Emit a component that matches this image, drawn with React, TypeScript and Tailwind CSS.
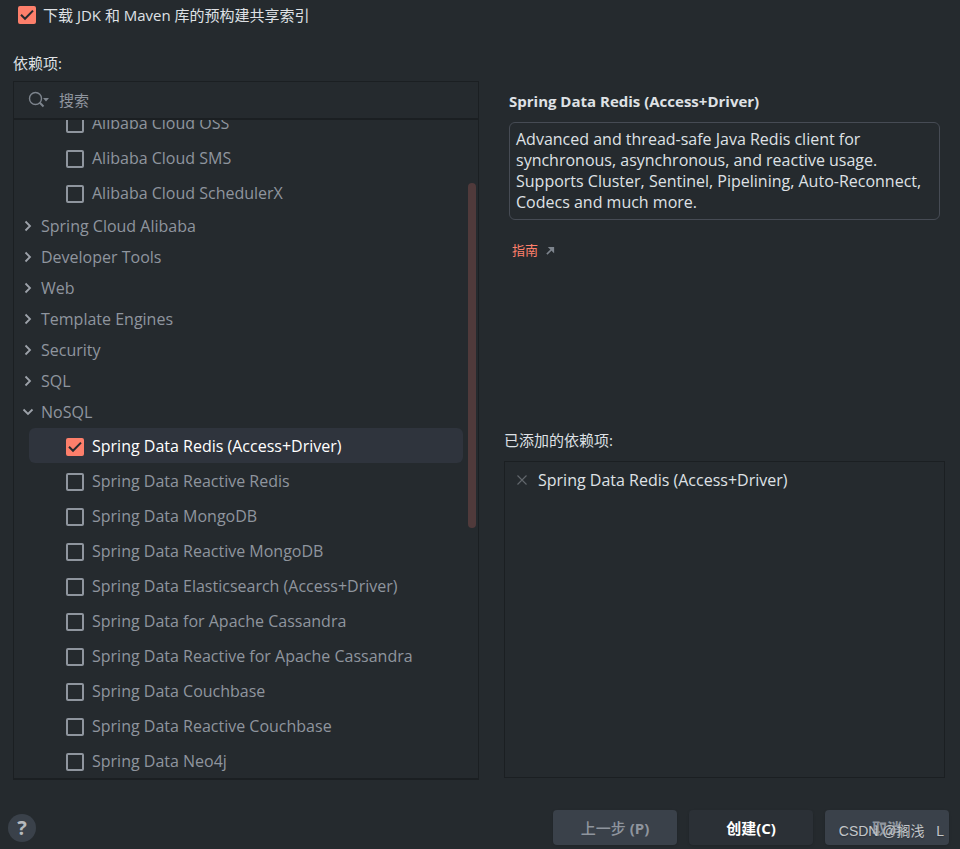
import { useState } from 'react'

interface TreeGroup {
  name: string
  open?: boolean
  items?: string[]
}

const DESCRIPTION =
  'Advanced and thread-safe Java Redis client for synchronous, asynchronous, and reactive usage. Supports Cluster, Sentinel, Pipelining, Auto-Reconnect, Codecs and much more.'

const alibabaItems = ['Alibaba Cloud OSS', 'Alibaba Cloud SMS', 'Alibaba Cloud SchedulerX']

const groups: TreeGroup[] = [
  { name: 'Spring Cloud Alibaba' },
  { name: 'Developer Tools' },
  { name: 'Web' },
  { name: 'Template Engines' },
  { name: 'Security' },
  { name: 'SQL' },
  {
    name: 'NoSQL',
    open: true,
    items: [
      'Spring Data Redis (Access+Driver)',
      'Spring Data Reactive Redis',
      'Spring Data MongoDB',
      'Spring Data Reactive MongoDB',
      'Spring Data Elasticsearch (Access+Driver)',
      'Spring Data for Apache Cassandra',
      'Spring Data Reactive for Apache Cassandra',
      'Spring Data Couchbase',
      'Spring Data Reactive Couchbase',
      'Spring Data Neo4j',
    ],
  },
]

interface CheckboxProps {
  id: string
  checked: boolean
  onChange: () => void
}

function Checkbox({ id, checked, onChange }: CheckboxProps) {
  return (
    <span className="grid size-[18px] shrink-0">
      <input
        id={id}
        type="checkbox"
        checked={checked}
        onChange={onChange}
        className="col-start-1 row-start-1 size-[18px] appearance-none rounded-xs border-2 border-[#8f959e] checked:border-[#fd7f6b] checked:bg-[#fd7f6b]"
      />
      {checked && (
        <svg
          viewBox="0 0 18 18"
          className="pointer-events-none col-start-1 row-start-1 size-[18px]"
          fill="none"
          stroke="#252a2e"
          strokeWidth="2"
        >
          <path d="M3 8.8 7 12.8 15 4.6" />
        </svg>
      )}
    </span>
  )
}

function DependencyRow({ name, checked, onToggle }: { name: string; checked: boolean; onToggle: () => void }) {
  const id = name.toLowerCase().replace(/[^a-z0-9]+/g, '-')

  return (
    <li
      className={
        checked
          ? 'mr-[15px] ml-[15px] flex h-[35px] shrink-0 items-center rounded-md bg-[#2f343d] pl-[37px] text-white'
          : 'mr-[15px] ml-[15px] flex h-[35px] shrink-0 items-center pl-[37px] text-[#8f959e]'
      }
    >
      <span className="flex pt-[3px]">
        <Checkbox id={id} checked={checked} onChange={onToggle} />
      </span>
      <label htmlFor={id} className="pl-2 whitespace-nowrap">
        {name}
      </label>
    </li>
  )
}

function GroupRow({ name, open }: { name: string; open?: boolean }) {
  return (
    <li className={open ? 'flex h-8 shrink-0 items-center pl-2' : 'flex h-[31px] shrink-0 items-center pl-2'}>
      <button type="button" aria-expanded={!!open} className="flex items-center gap-[7px] text-[#8f959e]">
        <svg viewBox="0 0 12 12" className="size-3" fill="none" stroke="#9da2aa" strokeWidth="1.8">
          <path d={open ? 'M1.5 3.5 6 8 10.5 3.5' : 'M3.5 1.5 8 6 3.5 10.5'} />
        </svg>
        {name}
      </button>
    </li>
  )
}

export default function App() {
  const [shared, setShared] = useState(true)
  const [selected, setSelected] = useState(['Spring Data Redis (Access+Driver)'])

  const toggle = (name: string) =>
    setSelected(selected.includes(name) ? selected.filter((s) => s !== name) : [...selected, name])

  return (
    <div className="relative flex min-h-screen flex-col bg-[#252a2e] font-['Open_Sans','Noto_Sans_CJK_SC',sans-serif] text-[15px] leading-5 text-[#dfe1e5]">
      <div className="flex items-center gap-[7px] pt-[5px] pl-[18px]">
        <Checkbox id="shared-index" checked={shared} onChange={() => setShared(!shared)} />
        <label htmlFor="shared-index">下载 JDK 和 Maven 库的预构建共享索引</label>
      </div>

      <main className="grid flex-1 grid-cols-[466fr_441fr] gap-[25px] pt-7 pr-[15px] pl-[13px]">
        <section className="flex flex-col">
          <h2>依赖项:</h2>
          <div className="relative mt-2 flex flex-1 flex-col border border-b-2 border-[#1b1f22]">
            <div className="flex h-[38px] items-center gap-[9px] border-b-2 border-[#1b1f22] pl-[14px]">
              <svg viewBox="0 0 22 18" className="h-[18px] w-[22px]" fill="none" stroke="#7d848d" strokeWidth="1.4">
                <circle cx="7.5" cy="7.5" r="6" />
                <path d="M11.8 11.8 15.5 15.5" strokeWidth="2" />
                <path d="M15 7h6L18 10.6Z" fill="#7d848d" stroke="none" />
              </svg>
              <input
                type="text"
                aria-label="搜索"
                placeholder="搜索"
                className="min-w-0 flex-1 bg-transparent outline-none placeholder:text-[#8f959e]"
              />
            </div>
            <ul className="flex h-[658px] flex-col justify-end overflow-hidden text-base leading-5">
              {alibabaItems.map((name) => (
                <DependencyRow
                  key={name}
                  name={name}
                  checked={selected.includes(name)}
                  onToggle={() => toggle(name)}
                />
              ))}
              {groups.map((group) => [
                <GroupRow key={group.name} name={group.name} open={group.open} />,
                ...(group.items ?? []).map((name) => (
                  <DependencyRow
                    key={name}
                    name={name}
                    checked={selected.includes(name)}
                    onToggle={() => toggle(name)}
                  />
                )),
              ])}
            </ul>
            <div className="absolute top-[101px] right-[2px] h-[345px] w-2 rounded-full bg-[#503a3b]" />
          </div>
        </section>

        <section className="flex flex-col">
          <div className="h-[377px] pt-[38px] pr-[5px] pl-[5px]">
            <h3 className="font-bold">Spring Data Redis (Access+Driver)</h3>
            <p className="mt-[11px] rounded-md border border-[#464b54] px-[6px] py-[6px] text-base leading-[21px]">
              {DESCRIPTION}
            </p>
            <a href="#guide" className="mt-5 ml-[3px] inline-flex items-center gap-2 text-[13px] text-[#fd7f6b]">
              指南
              <svg viewBox="0 0 10 10" className="size-[9px]" fill="none" stroke="#7d848d" strokeWidth="1.8">
                <path d="M1 9 7 3" />
                <path d="M2 1H9V8Z" fill="#7d848d" stroke="none" />
              </svg>
            </a>
          </div>
          <h2>已添加的依赖项:</h2>
          <ul className="mt-[11px] mb-[2px] flex-1 border border-[#1b1f22] pt-2 pl-3 text-base leading-5">
            {selected.map((name) => (
              <li key={name} className="flex items-center gap-[11px]">
                <button type="button" aria-label={`Remove ${name}`} onClick={() => toggle(name)}>
                  <svg viewBox="0 0 10 10" className="size-[10px]" fill="none" stroke="#62676c" strokeWidth="1.1">
                    <path d="M.5.5 9.5 9.5M9.5.5.5 9.5" />
                  </svg>
                </button>
                {name}
              </li>
            ))}
          </ul>
        </section>
      </main>

      <footer className="mt-[30px] flex items-center gap-3 pr-[11px] pb-1 pl-2 font-bold">
        <button
          type="button"
          aria-label="Help"
          className="mr-auto flex size-7 items-center justify-center rounded-full bg-[#3a414a] text-[20px] text-[#b6b9bd]"
        >
          ?
        </button>
        <button type="button" className="h-[35px] w-[124px] rounded-sm bg-[#3a414a] text-[#8f959e] shadow-sm">
          <span className="font-medium">上一步</span> (P)
        </button>
        <button type="button" className="h-[35px] w-[124px] rounded-sm bg-[#2b3036] text-white shadow-sm">
          创建(C)
        </button>
        <button type="button" className="h-[35px] w-[124px] rounded-sm bg-[#3a414a] text-[#8f959e] shadow-sm">
          取消
        </button>
      </footer>

      <span className="pointer-events-none absolute right-4 bottom-2 font-['Liberation_Sans','Noto_Sans_CJK_SC',sans-serif] text-[14px] whitespace-pre text-[#c3c6c9] text-shadow-sm">
        CSDN @搁浅   L
      </span>
    </div>
  )
}
